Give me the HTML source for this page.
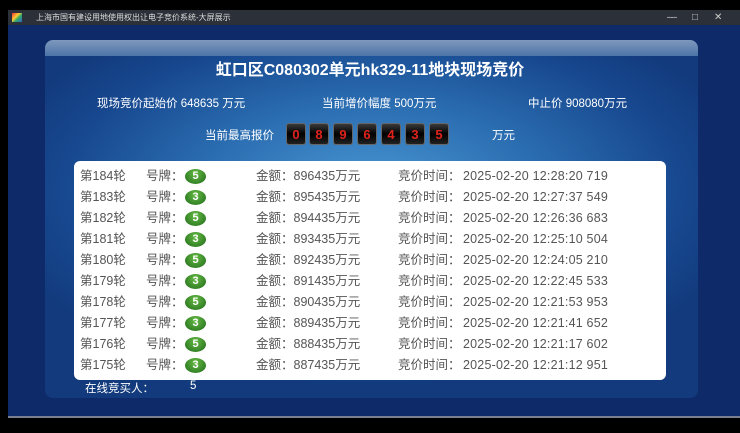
<!DOCTYPE html>
<html><head><meta charset="utf-8"><style>
*{margin:0;padding:0;box-sizing:border-box}
body{width:740px;height:433px;background:#000;position:relative;overflow:hidden;font-family:"Liberation Sans","Noto Sans CJK SC",sans-serif}
.tb{position:absolute;left:8px;top:10px;width:732px;height:15px;background:#2c3038;color:#ddd;font-size:8px;line-height:15px}
.tb .ic{position:absolute;left:4px;top:3px;width:10px;height:9px;background:linear-gradient(135deg,#e33,#fc3 40%,#3a6 60%,#36c)}
.tb .t{position:absolute;left:28px}
.tb .c{position:absolute;top:0;color:#ccc;font-size:10px}
.main{position:absolute;left:8px;top:25px;width:732px;height:391px;background:#0e2a68}
.line{position:absolute;left:8px;top:416px;width:732px;height:2px;background:#7a8090}
.panel{position:absolute;left:45px;top:40px;width:653px;height:358px;border-radius:8px;background:radial-gradient(ellipse 60% 55% at 50% 42%,#4a98d4 0%,#2a6cb0 45%,#17478e 80%,#123a7c 100%);}
.hdr{position:absolute;left:45px;top:40px;width:653px;height:16px;border-radius:8px 8px 0 0;background:linear-gradient(#7f98bd,#4c74a8)}
.w{position:absolute;color:#fff;white-space:nowrap}
.title{left:0;width:740px;text-align:center;top:56px;font-size:16px;font-weight:bold}
.info{font-size:11.5px;top:95px}
.dig{position:absolute;top:123px;width:20px;height:22px;background:linear-gradient(#3a3a3a,#000 50%,#222);border-radius:3px;color:#e0221c;font-weight:bold;font-size:13px;text-align:center;line-height:22px;border:1px solid #666}
.tbl{position:absolute;left:74px;top:161px;width:592px;height:219px;background:#fff;border-radius:6px}
.r{position:absolute;left:0;width:592px;height:21px;font-size:12.5px;color:#555;line-height:21px}
.r span{position:absolute}
.r span.d{left:389px;letter-spacing:0.2px}
.b{position:absolute;left:111px;top:3px;width:21px;height:15px;border-radius:50%;background:radial-gradient(ellipse at 50% 30%,#6b4,#1f6a1a);color:#fff;font-weight:bold;font-size:11px;text-align:center;line-height:15px}
</style></head><body>
<div class="tb"><div class="ic"></div><span class="t">上海市国有建设用地使用权出让电子竞价系统-大屏展示</span><span class="c" style="left:659px">—</span><span class="c" style="left:684px">□</span><span class="c" style="left:706px">✕</span></div>
<div class="main"></div><div class="line"></div>
<div class="panel"></div><div class="hdr"></div>
<div class="w title">虹口区C080302单元hk329-11地块现场竞价</div>
<div class="w info" style="left:97px">现场竞价起始价 648635 万元</div>
<div class="w info" style="left:322px">当前增价幅度 500万元</div>
<div class="w info" style="left:528px">中止价 908080万元</div>
<div class="w info" style="left:205px;top:127px">当前最高报价</div>
<div class="dig" style="left:286px">0</div><div class="dig" style="left:309px">8</div><div class="dig" style="left:333px">9</div><div class="dig" style="left:357px">6</div><div class="dig" style="left:381px">4</div><div class="dig" style="left:405px">3</div><div class="dig" style="left:429px">5</div>
<div class="w info" style="left:492px;top:127px">万元</div>
<div class="tbl">
<div class="r" style="top:5px"><span style="left:6px">第184轮</span><span style="left:72px">号牌：</span><div class="b">5</div><span style="left:182px">金额：896435万元</span><span style="left:324px">竞价时间：</span><span class="d">2025-02-20 12:28:20 719</span></div>
<div class="r" style="top:26px"><span style="left:6px">第183轮</span><span style="left:72px">号牌：</span><div class="b">3</div><span style="left:182px">金额：895435万元</span><span style="left:324px">竞价时间：</span><span class="d">2025-02-20 12:27:37 549</span></div>
<div class="r" style="top:47px"><span style="left:6px">第182轮</span><span style="left:72px">号牌：</span><div class="b">5</div><span style="left:182px">金额：894435万元</span><span style="left:324px">竞价时间：</span><span class="d">2025-02-20 12:26:36 683</span></div>
<div class="r" style="top:68px"><span style="left:6px">第181轮</span><span style="left:72px">号牌：</span><div class="b">3</div><span style="left:182px">金额：893435万元</span><span style="left:324px">竞价时间：</span><span class="d">2025-02-20 12:25:10 504</span></div>
<div class="r" style="top:89px"><span style="left:6px">第180轮</span><span style="left:72px">号牌：</span><div class="b">5</div><span style="left:182px">金额：892435万元</span><span style="left:324px">竞价时间：</span><span class="d">2025-02-20 12:24:05 210</span></div>
<div class="r" style="top:110px"><span style="left:6px">第179轮</span><span style="left:72px">号牌：</span><div class="b">3</div><span style="left:182px">金额：891435万元</span><span style="left:324px">竞价时间：</span><span class="d">2025-02-20 12:22:45 533</span></div>
<div class="r" style="top:131px"><span style="left:6px">第178轮</span><span style="left:72px">号牌：</span><div class="b">5</div><span style="left:182px">金额：890435万元</span><span style="left:324px">竞价时间：</span><span class="d">2025-02-20 12:21:53 953</span></div>
<div class="r" style="top:152px"><span style="left:6px">第177轮</span><span style="left:72px">号牌：</span><div class="b">3</div><span style="left:182px">金额：889435万元</span><span style="left:324px">竞价时间：</span><span class="d">2025-02-20 12:21:41 652</span></div>
<div class="r" style="top:173px"><span style="left:6px">第176轮</span><span style="left:72px">号牌：</span><div class="b">5</div><span style="left:182px">金额：888435万元</span><span style="left:324px">竞价时间：</span><span class="d">2025-02-20 12:21:17 602</span></div>
<div class="r" style="top:194px"><span style="left:6px">第175轮</span><span style="left:72px">号牌：</span><div class="b">3</div><span style="left:182px">金额：887435万元</span><span style="left:324px">竞价时间：</span><span class="d">2025-02-20 12:21:12 951</span></div>
</div>
<div class="w" style="left:85px;top:380px;font-size:11.5px">在线竞买人：</div>
<div class="w" style="left:190px;top:380px;font-size:11.5px">5</div>
</body></html>
